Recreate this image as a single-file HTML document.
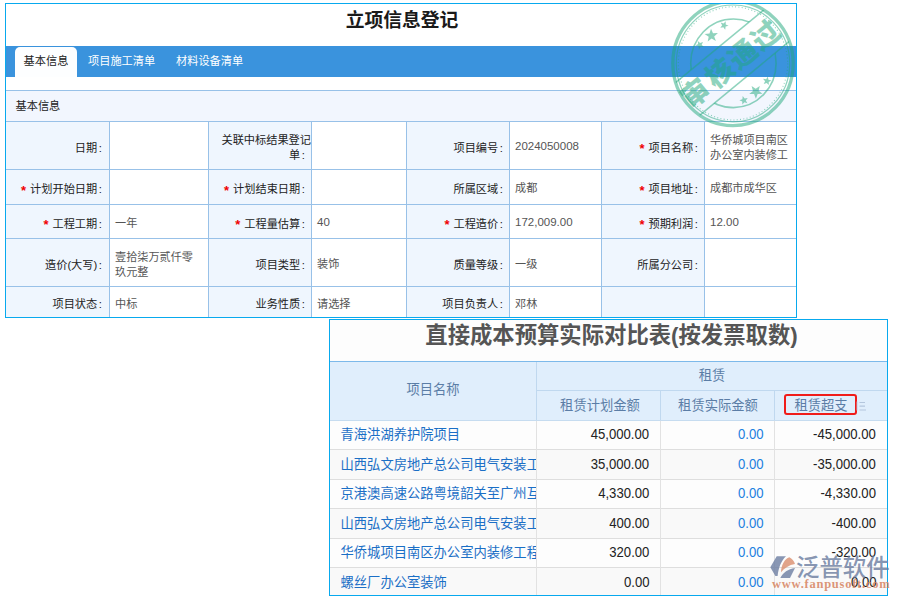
<!DOCTYPE html>
<html lang="zh-CN">
<head>
<meta charset="utf-8">
<title>立项信息登记</title>
<style>
html,body{margin:0;padding:0;}
body{width:900px;height:600px;position:relative;overflow:hidden;background:#fff;
  font-family:"Liberation Sans","Noto Sans CJK SC",sans-serif;}
.abs{position:absolute;}
#f1,#f2{position:absolute;box-sizing:border-box;border:1px solid #08a9ee;overflow:hidden;}
#f1{background:#fff;}
#f2{background:#fdfdfd;}
#f1 .title{position:absolute;left:1px;top:5px;width:790px;text-align:center;font-size:18.8px;font-weight:bold;color:#1a1a1a;line-height:24px;}
#f1 .tabbar{position:absolute;left:0;top:42px;width:790px;height:31px;background:#3a93dd;}
#f1 .tab{position:absolute;top:0;height:31px;line-height:31px;font-size:11.2px;color:#fff;white-space:nowrap;}
#f1 .tab.on{left:9px;top:1px;width:62px;height:30px;background:#fdfeff;color:#222;border-radius:5px 5px 0 0;text-align:center;line-height:29px;}
#f1 .sec{position:absolute;left:0;top:86px;width:790px;height:30px;border-top:1px solid #98c1e8;background:#f2f6fe;}
#f1 .sec span{position:absolute;left:9.5px;top:0;line-height:30px;font-size:11.2px;color:#222;}
.hl{position:absolute;left:0;width:790px;height:1px;background:#98c1e8;}
.vl{position:absolute;width:1px;background:#98c1e8;}
.lb{position:absolute;background:#eff6fe;}
.lt{position:absolute;font-size:11.2px;color:#222;text-align:right;white-space:nowrap;line-height:15px;}
.lt u{text-decoration:none;margin-left:1.5px;}
.lt i{font-style:normal;color:#f00000;margin-right:4px;font-size:13px;line-height:10px;position:relative;top:1.5px;font-weight:bold;}
.vt{position:absolute;font-size:11.15px;color:#555;white-space:nowrap;line-height:14.7px;}
.vt.num{font-size:11.5px;}
#f2 .title{position:absolute;left:3px;top:1px;width:557px;text-align:center;font-size:22.35px;font-weight:bold;color:#555;line-height:30px;white-space:nowrap;}
#f2 .hd{position:absolute;left:0;top:41px;width:557px;height:59px;background:#e0eefc;border-top:1px solid #7db9ea;}
.ht{position:absolute;font-size:13.3px;color:#5b7da6;text-align:center;white-space:nowrap;line-height:20px;}
.row{position:absolute;left:0;width:557px;height:29px;}
.rl{position:absolute;left:0;width:557px;height:1px;background:#dedede;}
.row .n{position:absolute;left:10.5px;top:-1px;line-height:29px;font-size:13.3px;color:#1b6fc6;white-space:nowrap;width:195px;overflow:hidden;}
.row .a,.row .b,.row .c{position:absolute;top:-2px;line-height:29px;font-size:14.2px;color:#222;text-align:right;white-space:nowrap;transform:scaleX(0.925);transform-origin:100% 50%;}
.row .a{right:237.5px;}
.row .b{right:123.5px;color:#1b7fe0;}
.row .c{right:10.8px;}
.gv{position:absolute;width:1px;background:#e2e2e2;}
.hv{position:absolute;background:#c0d8ef;}
</style>
</head>
<body>

<div id="f1" style="left:5px;top:3px;width:792px;height:315px">
  <div class="title">立项信息登记</div>
  <div class="tabbar"><div class="tab on">基本信息</div><div class="tab" style="left:82px">项目施工清单</div><div class="tab" style="left:170px">材料设备清单</div></div>
  <div class="sec"><span>基本信息</span></div>
  <div class="lb" style="left:0px;top:117px;width:103px;height:196px"></div>
  <div class="lb" style="left:203px;top:117px;width:102px;height:196px"></div>
  <div class="lb" style="left:401px;top:117px;width:102px;height:196px"></div>
  <div class="lb" style="left:596px;top:117px;width:102px;height:196px"></div>
  <div class="hl" style="top:117px"></div>
  <div class="hl" style="top:165px"></div>
  <div class="hl" style="top:200px"></div>
  <div class="hl" style="top:234px"></div>
  <div class="hl" style="top:282px"></div>
  <div class="vl" style="left:103px;top:117px;height:196px"></div>
  <div class="vl" style="left:202px;top:117px;height:196px"></div>
  <div class="vl" style="left:305px;top:117px;height:196px"></div>
  <div class="vl" style="left:400px;top:117px;height:196px"></div>
  <div class="vl" style="left:503px;top:117px;height:196px"></div>
  <div class="vl" style="left:595px;top:117px;height:196px"></div>
  <div class="vl" style="left:698px;top:117px;height:196px"></div>
  <div class="lt" style="right:694.2px;top:136.5px;">日期<u>:</u></div>
  <div class="lt" style="right:485px;top:129.3px;line-height:14.7px">关联中标结果登记<br><span style="margin-right:6.2px">单<u>:</u></span></div>
  <div class="lt" style="right:293.2px;top:136.5px;">项目编号<u>:</u></div>
  <div class="lt" style="right:98.2px;top:136.5px;"><i>*</i>项目名称<u>:</u></div>
  <div class="vt num" style="left:509px;top:134.7px">2024050008</div>
  <div class="vt" style="left:704px;top:129.3px">华侨城项目南区<br>办公室内装修工</div>
  <div class="lt" style="right:694.2px;top:178.0px;"><i>*</i>计划开始日期<u>:</u></div>
  <div class="lt" style="right:491.2px;top:178.0px;"><i>*</i>计划结束日期<u>:</u></div>
  <div class="lt" style="right:293.2px;top:178.0px;">所属区域<u>:</u></div>
  <div class="lt" style="right:98.2px;top:178.0px;"><i>*</i>项目地址<u>:</u></div>
  <div class="vt" style="left:509px;top:177.2px">成都</div>
  <div class="vt" style="left:704px;top:177.2px">成都市成华区</div>
  <div class="lt" style="right:694.2px;top:212.5px;"><i>*</i>工程工期<u>:</u></div>
  <div class="lt" style="right:491.2px;top:212.5px;"><i>*</i>工程量估算<u>:</u></div>
  <div class="lt" style="right:293.2px;top:212.5px;"><i>*</i>工程造价<u>:</u></div>
  <div class="lt" style="right:98.2px;top:212.5px;"><i>*</i>预期利润<u>:</u></div>
  <div class="vt" style="left:109px;top:211.7px">一年</div>
  <div class="vt num" style="left:311px;top:210.7px">40</div>
  <div class="vt num" style="left:509px;top:210.7px">172,009.00</div>
  <div class="vt num" style="left:704px;top:210.7px">12.00</div>
  <div class="lt" style="right:694.2px;top:253.5px;">造价(大写)<u>:</u></div>
  <div class="lt" style="right:491.2px;top:253.5px;">项目类型<u>:</u></div>
  <div class="lt" style="right:293.2px;top:253.5px;">质量等级<u>:</u></div>
  <div class="lt" style="right:98.2px;top:253.5px;">所属分公司<u>:</u></div>
  <div class="vt" style="left:109px;top:246.3px">壹拾柒万贰仟零<br>玖元整</div>
  <div class="vt" style="left:311px;top:252.6px">装饰</div>
  <div class="vt" style="left:509px;top:252.6px">一级</div>
  <div class="lt" style="right:694.2px;top:293.0px;">项目状态<u>:</u></div>
  <div class="lt" style="right:491.2px;top:293.0px;">业务性质<u>:</u></div>
  <div class="lt" style="right:293.2px;top:293.0px;">项目负责人<u>:</u></div>
  <div class="vt" style="left:109px;top:293.1px">中标</div>
  <div class="vt" style="left:311px;top:293.1px">请选择</div>
  <div class="vt" style="left:509px;top:293.1px">邓林</div>
<svg class="abs" style="left:660px;top:-9.4px" width="136" height="136" viewBox="-68 -68 136 136">
  <defs>
    <clipPath id="cOut"><ellipse cx="-1.0" cy="0.4" rx="60" ry="62"/></clipPath>
    <clipPath id="cBand"><rect x="-70" y="-80" width="140" height="58"/><rect x="-70" y="18.5" width="140" height="60"/></clipPath>
  </defs>
  <g fill="none" stroke="#1fa77b" stroke-opacity="0.5">
    <ellipse cx="-1.0" cy="0.4" rx="60.15" ry="62.15" stroke-width="3.3"/>
    <ellipse cx="-1.0" cy="0.4" rx="56.7" ry="58.4" stroke-width="1.2"/>
    <ellipse cx="-1.0" cy="0.4" rx="54.7" ry="56.6" stroke-width="1.1" stroke-dasharray="1 2.3"/>
  </g>
  <g fill="#1fa77b" fill-opacity="0.5"><polygon points="-18.1,-21.9 -22.4,-24.4 -26.3,-21.4 -25.3,-26.2 -29.4,-29.0 -24.5,-29.6 -23.0,-34.3 -21.0,-29.8 -16.1,-29.9 -19.8,-26.6"/><polygon points="-8.8,-33.2 -10.6,-35.8 -13.7,-35.2 -11.8,-37.7 -13.4,-40.4 -10.4,-39.4 -8.3,-41.8 -8.3,-38.6 -5.4,-37.3 -8.4,-36.4"/><polygon points="-30.2,-15.9 -33.4,-16.3 -35.0,-13.6 -35.6,-16.7 -38.7,-17.4 -35.9,-18.9 -36.2,-22.0 -33.9,-19.9 -31.0,-21.1 -32.3,-18.3"/><polygon points="17.6,23.1 21.7,25.8 25.8,23.0 24.6,27.7 28.5,30.7 23.6,31.0 21.9,35.7 20.1,31.1 15.2,31.0 19.0,27.9"/><polygon points="29.0,15.8 32.2,16.3 33.8,13.6 34.4,16.7 37.5,17.4 34.7,18.9 34.9,22.1 32.7,19.9 29.7,21.1 31.1,18.2"/><polygon points="8.7,33.0 10.6,35.6 13.7,35.0 11.8,37.5 13.4,40.2 10.4,39.2 8.3,41.6 8.3,38.4 5.4,37.2 8.4,36.2"/></g>
  <g transform="rotate(-39.5)" clip-path="url(#cBand)"><g transform="rotate(39.5)"><ellipse cx="-0.6" cy="0.30000000000000004" rx="42.7" ry="44.3" fill="none" stroke="#1fa77b" stroke-opacity="0.5" stroke-width="1.6"/></g></g>
  <g clip-path="url(#cOut)"><g transform="rotate(-39.5)" stroke="#1fa77b" stroke-opacity="0.5" stroke-width="1.5">
      <line x1="-70" y1="-22" x2="70" y2="-22"/>
      <line x1="-70" y1="18.5" x2="70" y2="18.5"/>
  </g></g>
  <g transform="rotate(-39.5)">
    <text x="-49 -17.2 12.5 41.9" y="8.8" text-anchor="middle" font-family="'Noto Sans CJK SC',sans-serif" font-weight="900" font-size="28" fill="#1fa77b" fill-opacity="0.5">审核通过</text>
  </g>
</svg>
</div>
<div id="f2" style="left:329px;top:319px;width:559px;height:277px">
  <div class="title">直接成本预算实际对比表(按发票取数)</div>
  <div class="hd"></div>
  <div class="hv" style="left:206px;top:42px;width:1px;height:59px"></div>
  <div class="hv" style="left:330px;top:71px;width:1px;height:30px"></div>
  <div class="hv" style="left:444px;top:71px;width:1px;height:30px"></div>
  <div class="hv" style="left:206px;top:70px;width:351px;height:1px"></div>
  <div class="ht" style="left:0;top:60px;width:206px">项目名称</div>
  <div class="ht" style="left:207px;top:46px;width:350px">租赁</div>
  <div class="ht" style="left:208px;top:76px;width:124px">租赁计划金额</div>
  <div class="ht" style="left:331px;top:76px;width:114px">租赁实际金额</div>
  <div class="ht" style="left:464px;top:76px;width:54px">租赁超支</div>
  <div class="abs" style="left:454px;top:74px;width:69px;height:17px;border:2px solid #f01c1a;border-radius:3px"></div>
  <svg class="abs" style="left:525px;top:78.5px" width="12" height="14" viewBox="0 0 12 14"><g stroke="#b4c6dd" stroke-width="1.2" fill="none"><path d="M2 2.5V11.5" stroke-opacity="0.7"/><path d="M4.5 3.5H10M4.5 7.2H10M4.5 11H11"/></g></svg>

  <div class="rl" style="top:100px;background:#c6dcf0"></div>
  <div class="row" style="top:101px;background:#fdfdfd"><div class="n" style="top:-1px">青海洪湖养护院项目</div><div class="a" style="top:-1px">45,000.00</div><div class="b" style="top:-1px">0.00</div><div class="c" style="top:-1px">-45,000.00</div></div>
  <div class="rl" style="top:129px"></div>
  <div class="row" style="top:130px;background:#f9f9f9"><div class="n" style="top:0px">山西弘文房地产总公司电气安装工程</div><div class="a" style="top:0px">35,000.00</div><div class="b" style="top:0px">0.00</div><div class="c" style="top:0px">-35,000.00</div></div>
  <div class="rl" style="top:159px"></div>
  <div class="row" style="top:160px;background:#fdfdfd"><div class="n" style="top:-1px">京港澳高速公路粤境韶关至广州互通</div><div class="a" style="top:-1px">4,330.00</div><div class="b" style="top:-1px">0.00</div><div class="c" style="top:-1px">-4,330.00</div></div>
  <div class="rl" style="top:188px"></div>
  <div class="row" style="top:189px;background:#f9f9f9"><div class="n" style="top:0px">山西弘文房地产总公司电气安装工程</div><div class="a" style="top:0px">400.00</div><div class="b" style="top:0px">0.00</div><div class="c" style="top:0px">-400.00</div></div>
  <div class="rl" style="top:218px"></div>
  <div class="row" style="top:219px;background:#fdfdfd"><div class="n" style="top:-1px">华侨城项目南区办公室内装修工程</div><div class="a" style="top:-1px">320.00</div><div class="b" style="top:-1px">0.00</div><div class="c" style="top:-1px">-320.00</div></div>
  <div class="rl" style="top:247px"></div>
  <div class="row" style="top:248px;background:#f9f9f9"><div class="n" style="top:0px">螺丝厂办公室装饰</div><div class="a" style="top:0px">0.00</div><div class="b" style="top:0px">0.00</div><div class="c" style="top:0px">0.00</div></div>
  <div class="gv" style="left:206px;top:101px;height:175px"></div>
  <div class="gv" style="left:330px;top:101px;height:175px"></div>
  <div class="gv" style="left:444px;top:101px;height:175px"></div>
</div>
<div class="abs" style="left:0;top:0;width:900px;height:600px">
  <svg class="abs" style="left:768px;top:553px" width="30" height="28" viewBox="0 0 30 28">
    <path d="M2.3 14.3 L8.7 3.3 H18 C13 8 10.5 15 9.6 23 H7.4 Z" fill="#6f80a3" fill-opacity="0.82"/>
    <path d="M13 19.2 C13.3 12 16.5 6 21.4 4.3 C24 5.5 26 8 27 11 C21 12 16.5 15 13 19.2 Z" fill="#dc9476" fill-opacity="0.85"/>
    <path d="M12.3 25 C15 19.5 20 16 27 15 L22 25 Z" fill="#6f80a3" fill-opacity="0.82"/>
  </svg>
  <div class="abs" style="left:796px;top:550px;font-size:23.4px;font-weight:500;line-height:32px;color:rgba(104,122,158,0.8);white-space:nowrap;font-family:'Noto Sans CJK SC',sans-serif">泛普软件</div>
  <div class="abs" style="left:772px;top:577px;font-size:12.5px;line-height:14px;color:rgba(214,130,96,0.85);white-space:nowrap;font-family:'Liberation Serif',serif;font-weight:bold;letter-spacing:0.75px">www.fanpusoft.com</div>
</div>
</body>
</html>
